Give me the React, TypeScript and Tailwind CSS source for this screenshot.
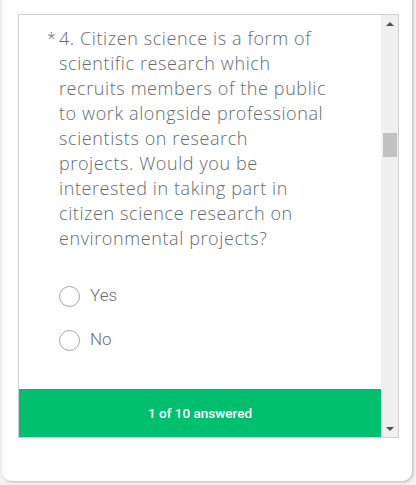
import React from 'react';

const lines = [
  '4. Citizen science is a form of',
  'scientific research which',
  'recruits members of the public',
  'to work alongside professional',
  'scientists on research',
  'projects. Would you be',
  'interested in taking part in',
  'citizen science research on',
  'environmental projects?',
];

const Radio = ({ label }: { label: string }) => (
  <label className="flex items-center h-[24px] cursor-pointer">
    <span className="w-[21px] h-[21px] rounded-full border border-[#a3a3a3] bg-white" />
    <span className="ml-[10px] text-[17px] text-[#6b7075] font-light font-['Roboto',sans-serif]">{label}</span>
  </label>
);

export default function App() {
  return (
    <div className="w-[416px] h-[485px] bg-[#f3f3f3] pl-[2px] pr-[4px] pb-[4px] overflow-hidden">
      <div className="-mt-[8px] h-[489px] bg-white rounded-[9px] shadow-[1px_1px_3px_rgba(0,0,0,0.25)] pt-[22px] pl-[16px] pr-[12px]">
        <div className="w-[381px] h-[424px] border border-[#cfcfcf] flex">
          <div className="flex-1 flex flex-col">
            <div className="flex-1 pl-[28px] pt-[11px]">
              <div className="flex text-[18px] leading-[25px] tracking-[0.6px] text-[#646b72] font-light font-['Open_Sans',sans-serif]">
                <span className="w-[12px] shrink-0 text-[16px] tracking-normal">*</span>
                <div className="whitespace-nowrap">
                  {lines.map((l, i) => (
                    <div key={i}>{l}</div>
                  ))}
                </div>
              </div>
              <div className="pl-[12px] pt-[33px] flex flex-col gap-[20px]">
                <Radio label="Yes" />
                <Radio label="No" />
              </div>
            </div>
            <div className="h-[48px] bg-[#00bf6f] flex items-center justify-center text-white text-[13.5px] font-medium font-['Roboto',sans-serif]">
              1 of 10 answered
            </div>
          </div>
          <div className="w-[17px] bg-[#f0f0f0] flex flex-col items-center">
            <div className="h-[17px] flex items-center justify-center">
              <span className="w-0 h-0 border-l-[4px] border-r-[4px] border-b-[4px] border-l-transparent border-r-transparent border-b-[#505050]" />
            </div>
            <div className="mt-[101px] w-[14px] h-[24px] bg-[#c1c1c1]" />
            <div className="flex-1" />
            <div className="h-[17px] flex items-center justify-center">
              <span className="w-0 h-0 border-l-[4px] border-r-[4px] border-t-[4px] border-l-transparent border-r-transparent border-t-[#505050]" />
            </div>
          </div>
        </div>
      </div>
    </div>
  );
}
